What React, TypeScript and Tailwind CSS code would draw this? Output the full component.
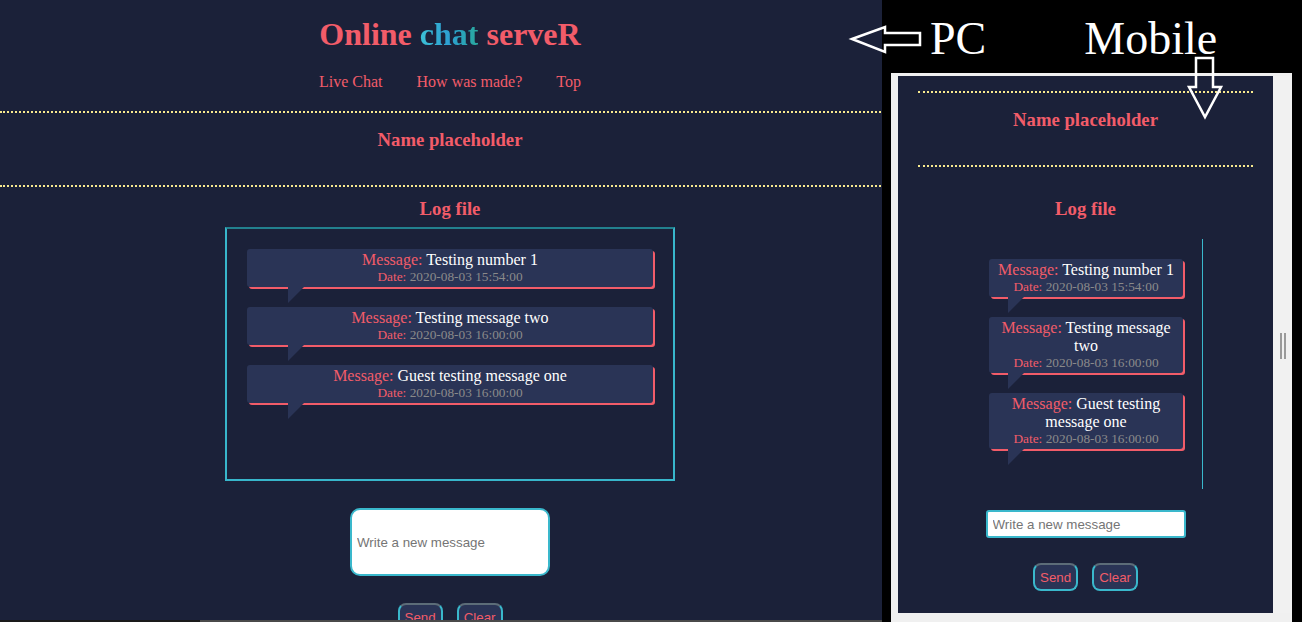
import React from "react";

const RED = "text-[#f25c69]";

type Msg = { text: string; date: string };
const msgs: Msg[] = [
  { text: "Testing number 1", date: "2020-08-03 15:54:00" },
  { text: "Testing message two", date: "2020-08-03 16:00:00" },
  { text: "Guest testing message one", date: "2020-08-03 16:00:00" },
];

function Bubble({ m }: { m: Msg }) {
  return (
    <div className="relative mb-[20px] rounded-[3px] bg-[#2a3456] px-[4px] pt-[2px] pb-[3px] text-center shadow-[2px_2px_0_0_#f25c69]">
      <div className="text-[16px] leading-[18px]">
        <span className={RED}>Message: </span>
        <span className="text-white">{m.text}</span>
      </div>
      <div className="text-[13.33px] leading-[15px]">
        <span className={RED}>Date: </span>
        <span className="text-[#8a8a8a]">{m.date}</span>
      </div>
      <div className="absolute left-[10%] top-full h-0 w-0 border-t-[16px] border-r-[16px] border-t-[#2a3456] border-r-transparent" />
    </div>
  );
}

function Dotted({ className = "" }: { className?: string }) {
  return <div className={`border-t-2 border-dotted border-[#f7e98e] ${className}`} />;
}

function Buttons({ className = "" }: { className?: string }) {
  const b =
    "h-[28px] rounded-[8px] border-2 border-[#3ab8cc] border-t-[#5c6c78] bg-[#2a3456] px-[5px] text-[13.33px] leading-[15px] text-[#f25c69] [font-family:'Liberation_Sans',Arial,sans-serif]";
  return (
    <div className={`flex justify-center gap-[14px] ${className}`}>
      <button className={b}>Send</button>
      <button className={b}>Clear</button>
    </div>
  );
}

export default function App() {
  return (
    <div className="relative flex h-[622px] w-[1302px] overflow-hidden bg-black [font-family:'Liberation_Serif','Times_New_Roman',serif]">
      {/* PC view */}
      <div className="relative h-[622px] w-[882px] shrink-0 overflow-hidden bg-[#1b2139]">
        <div className="flex w-[900px] flex-col items-center">
          <h1 className="mt-[18px] text-[32px] font-bold leading-[32px]">
            <span className={RED}>Online </span>
            <span className="bg-linear-to-r from-[#3cc0d6] via-[#2d9fd2] to-[#2aa79c] bg-clip-text text-transparent">chat</span>
            <span className={RED}> serveR</span>
          </h1>
          <nav className={`mt-[23px] flex gap-[34px] text-[16px] leading-[18px] ${RED}`}>
            <span>Live Chat</span>
            <span>How was made?</span>
            <span>Top</span>
          </nav>
          <Dotted className="mt-[20px] w-full" />
          <h3 className={`mt-[17px] text-[18.72px] font-bold leading-[20px] ${RED}`}>Name placeholder</h3>
          <Dotted className="mt-[35px] w-full" />
          <h3 className={`mt-[12px] text-[18.72px] font-bold leading-[20px] ${RED}`}>Log file</h3>
          <div className="mt-[8px] h-[254px] w-[450px] border-2 border-[#38b6cb] border-t-[#22808e] px-[20px] pt-[20px]">
            {msgs.map((m, i) => (
              <Bubble key={i} m={m} />
            ))}
          </div>
          <input
            placeholder="Write a new message"
            className="mt-[27px] h-[68px] w-[200px] rounded-[10px] border-2 border-[#3ab8cc] bg-white px-[5px] text-[13.33px] text-black placeholder:text-[#757575] outline-none [font-family:'Liberation_Sans',Arial,sans-serif]"
          />
          <Buttons className="mt-[27px]" />
        </div>
        <div className="absolute bottom-0 left-0 flex h-[2px] w-full">
          <div className="w-[200px] bg-[#1a1a1a]" />
          <div className="flex-1 bg-[#4a4a4a]" />
        </div>
      </div>

      {/* Right side */}
      <div className="flex flex-1 flex-col">
        <div className="flex h-[73px] pl-[48px] pt-[16px] text-[46px] leading-[46px] text-white">
          <span>PC</span>
          <span className="ml-[98px]">Mobile</span>
        </div>
        <div className="ml-[9px] flex h-[549px] w-[401px] bg-[#f0f0f0] pl-[7px] pt-[3px] pb-[9px]">
          <div className="flex h-full w-[375px] flex-col items-center bg-[#1b2139]">
            <Dotted className="mt-[15px] w-[335px]" />
            <h3 className={`mt-[17px] text-[18.72px] font-bold leading-[20px] ${RED}`}>Name placeholder</h3>
            <Dotted className="mt-[35px] w-[335px]" />
            <h3 className={`mt-[32px] text-[18.72px] font-bold leading-[20px] ${RED}`}>Log file</h3>
            <div className="mt-[20px] h-[250px] w-[235px] border-r border-[#3ab8cc] pl-[21px] pr-[19px] pt-[20px]">
              {msgs.map((m, i) => (
                <Bubble key={i} m={m} />
              ))}
            </div>
            <input
              placeholder="Write a new message"
              className="mt-[21px] h-[28px] w-[200px] rounded-[3px] border-2 border-[#3ab8cc] bg-white px-[5px] text-[13.33px] text-black placeholder:text-[#757575] outline-none [font-family:'Liberation_Sans',Arial,sans-serif]"
            />
            <Buttons className="mt-[25px]" />
          </div>
          <div className="relative w-[19px] bg-[#f1f1f1]">
            <div className="absolute left-[7px] top-[257px] h-[26px] w-[2px] bg-[#9a9a9a]" />
            <div className="absolute left-[11px] top-[257px] h-[26px] w-[2px] bg-[#9a9a9a]" />
          </div>
        </div>
      </div>

      {/* Arrows */}
      <svg className="pointer-events-none absolute left-0 top-0" width="1302" height="622" viewBox="0 0 1302 622">
        <path d="M852 39 L885 27 L885 33 L920 33 L920 45 L885 45 L885 52 Z" fill="none" stroke="#fff" strokeWidth="2.5" strokeLinejoin="miter" />
        <path d="M1196 58 L1213 58 L1213 87 L1221 87 L1205 117 L1189 87 L1196 87 Z" fill="none" stroke="#fff" strokeWidth="2.5" strokeLinejoin="miter" />
      </svg>
    </div>
  );
}
